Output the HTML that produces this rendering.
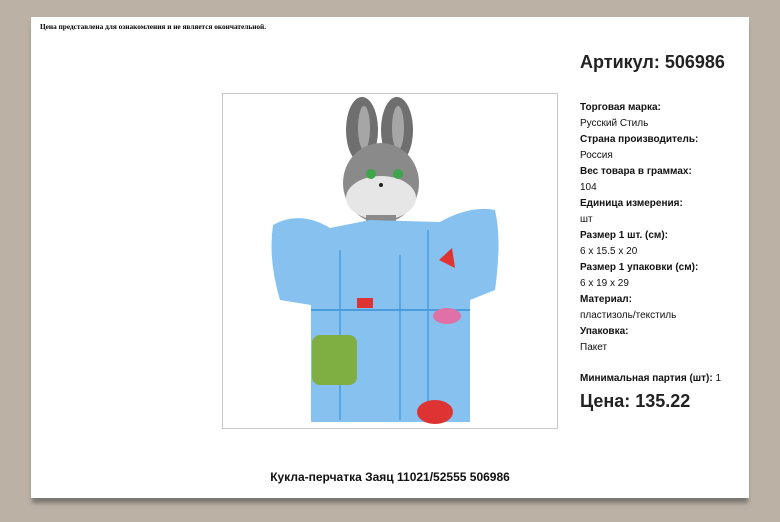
<!DOCTYPE html>
<html><head><meta charset="utf-8"><style>
html,body{margin:0;padding:0;width:780px;height:522px;background:#bcb1a5;overflow:hidden;position:relative;font-family:"Liberation Sans",Arial,sans-serif}
.page{position:absolute;left:31px;top:17px;width:718px;height:481px;background:#fff;box-shadow:0 6px 4px -1px #7a7672}
.note{position:absolute;left:40px;top:22px;font:bold 7.3px "Liberation Serif",serif;color:#000}
.img{position:absolute;left:222px;top:93px;width:334px;height:334px;border:1px solid #c8c8c8;background:#fff}
.art{position:absolute;left:580px;top:52px;font-size:18px;font-weight:bold;color:#222}
.info{position:absolute;left:580px;top:100px;font-size:10px;color:#111;line-height:16px}
.info b{font-weight:bold}
.min{position:absolute;left:580px;top:373px;font-size:10px;color:#111;font-weight:bold}
.price{position:absolute;left:580px;top:391px;font-size:18px;font-weight:bold;color:#222}
.foot{position:absolute;left:0;width:780px;top:470px;text-align:center;font-size:12px;font-weight:bold;color:#111}
</style></head><body>
<div class="page"></div>
<div class="note">Цена представлена для ознакомления и не является окончательной.</div>
<div class="img"></div>
<svg style="position:absolute;left:0;top:0" width="780" height="522">
<ellipse cx="362" cy="130" rx="16" ry="33" fill="#6f6f6f"/>
<ellipse cx="397" cy="130" rx="16" ry="33" fill="#6f6f6f"/>
<ellipse cx="364" cy="128" rx="6" ry="22" fill="#a6a6a6"/>
<ellipse cx="398" cy="128" rx="6" ry="22" fill="#a6a6a6"/>
<ellipse cx="381" cy="183" rx="38" ry="40" fill="#8a8a8a"/>
<ellipse cx="381" cy="198" rx="35" ry="22" fill="#e6e6e6"/>
<circle cx="371" cy="174" r="5" fill="#3da54a"/><circle cx="398" cy="174" r="5" fill="#3da54a"/>
<circle cx="381" cy="185" r="2" fill="#222"/>
<rect x="366" y="215" width="30" height="20" fill="#8a8a8a"/>
<path d="M273 225 Q300 210 330 228 L370 220 L440 222 Q470 205 495 210 Q502 240 495 290 L470 300 L470 422 L311 422 L311 305 L280 300 Q268 260 273 225 Z" fill="#86c1ef"/>
<path d="M311 310 L470 310" stroke="#4a9ddd" stroke-width="2"/>
<path d="M340 250 L340 420 M400 255 L400 420 M428 230 L428 420" stroke="#4a9ddd" stroke-width="1.5"/>
<rect x="312" y="335" width="45" height="50" rx="8" fill="#7fae43"/>
<ellipse cx="435" cy="412" rx="18" ry="12" fill="#d33"/>
<path d="M439 260 L452 248 L455 268 Z" fill="#d33"/>
<ellipse cx="447" cy="316" rx="14" ry="8" fill="#e070a8"/>
<rect x="357" y="298" width="16" height="10" fill="#d33"/>
</svg>
<div class="art">Артикул: 506986</div>
<div class="info"><b>Торговая марка:</b><br>Русский Стиль<br><b>Страна производитель:</b><br>Россия<br><b>Вес товара в граммах:</b><br>104<br><b>Единица измерения:</b><br>шт<br><b>Размер 1 шт. (см):</b><br>6 x 15.5 x 20<br><b>Размер 1 упаковки (см):</b><br>6 x 19 x 29<br><b>Материал:</b><br>пластизоль/текстиль<br><b>Упаковка:</b><br>Пакет</div>
<div class="min">Минимальная партия (шт): <span style="font-weight:normal">1</span></div>
<div class="price">Цена: 135.22</div>
<div class="foot">Кукла-перчатка Заяц 11021/52555 506986</div>
</body></html>
